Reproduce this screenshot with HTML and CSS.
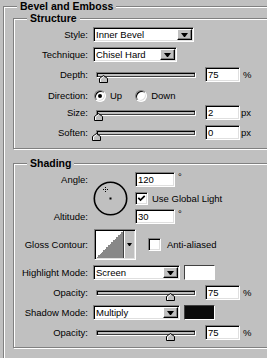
FILE: index.html
```html
<!DOCTYPE html>
<html lang="en">
<head>
<meta charset="utf-8">
<title>Bevel and Emboss</title>
<link rel="stylesheet" href="styles.css">
</head>
<body>
<fieldset class="group">
  <legend class="group-title">Bevel and Emboss</legend>

  <fieldset class="panel panel-structure">
    <legend class="panel-title">Structure</legend>
    <div class="rows">
      <div class="row">
        <span class="lbl">Style:</span>
        <div class="select select-style"><span class="select-text">Inner Bevel</span><span class="drop"><span class="tri"></span></span></div>
      </div>
      <div class="row">
        <span class="lbl">Technique:</span>
        <div class="select select-tech"><span class="select-text">Chisel Hard</span><span class="drop"><span class="tri"></span></span></div>
      </div>
      <div class="row">
        <span class="lbl">Depth:</span>
        <div class="slider"><span class="thumb" style="left:2px"><svg width="9" height="8" viewBox="0 0 9 8"><path d="M0.5 7.5V3.5L4.5 0.5L8.5 3.5V7.5Z" fill="#c0c0c0" stroke="#000"/><path d="M1.5 7V3.9L4.5 1.7" fill="none" stroke="#fff"/></svg></span></div>
        <span class="num">75</span><span class="unit">%</span>
      </div>
      <div class="row row-dir">
        <span class="lbl">Direction:</span>
        <div class="opts">
          <span class="opt"><span class="radio"><span class="dot"></span></span>Up</span>
          <span class="opt"><span class="radio"></span>Down</span>
        </div>
      </div>
      <div class="row">
        <span class="lbl">Size:</span>
        <div class="slider"><span class="thumb" style="left:-3px"><svg width="9" height="8" viewBox="0 0 9 8"><path d="M0.5 7.5V3.5L4.5 0.5L8.5 3.5V7.5Z" fill="#c0c0c0" stroke="#000"/><path d="M1.5 7V3.9L4.5 1.7" fill="none" stroke="#fff"/></svg></span></div>
        <span class="num">2</span><span class="unit unit-px">px</span>
      </div>
      <div class="row">
        <span class="lbl">Soften:</span>
        <div class="slider"><span class="thumb" style="left:-5px"><svg width="9" height="8" viewBox="0 0 9 8"><path d="M0.5 7.5V3.5L4.5 0.5L8.5 3.5V7.5Z" fill="#c0c0c0" stroke="#000"/><path d="M1.5 7V3.9L4.5 1.7" fill="none" stroke="#fff"/></svg></span></div>
        <span class="num">0</span><span class="unit unit-px">px</span>
      </div>
    </div>
  </fieldset>

  <fieldset class="panel panel-shading">
    <legend class="panel-title">Shading</legend>
    <div class="rows">
      <div class="angle-grid">
        <span class="lbl2 g-r1">Angle:</span>
        <svg class="dial" width="35" height="35" viewBox="0 0 35 35"><circle cx="17.5" cy="17.5" r="16.2" fill="none" stroke="#000" stroke-width="1.6"/><path d="M10 8.5h5M12.5 6v5" stroke="#000" stroke-width="1" stroke-dasharray="1 1"/><rect x="16.5" y="16.5" width="2" height="2" fill="#000"/></svg>
        <div class="cell g-r1c"><span class="num num-deg">120</span><span class="deg">°</span></div>
        <div class="cell g-r2c"><span class="check"><svg width="9" height="9" viewBox="0 0 9 9"><path d="M1.3 3.8L3.5 6L7.7 1.8" fill="none" stroke="#000" stroke-width="1.7"/></svg></span><span class="cb-text">Use Global Light</span></div>
        <span class="lbl2 g-r3">Altitude:</span>
        <div class="cell g-r3c"><span class="num num-deg">30</span><span class="deg">°</span></div>
      </div>

      <div class="row row-gloss">
        <span class="lbl">Gloss Contour:</span>
        <div class="contour"><span class="contour-preview"></span><span class="contour-drop"><span class="tri tri-sm"></span></span></div>
        <span class="check check-aa"></span><span class="cb-text">Anti-aliased</span>
      </div>

      <div class="row">
        <span class="lbl">Highlight Mode:</span>
        <div class="select select-mode"><span class="select-text">Screen</span><span class="drop"><span class="tri"></span></span></div>
        <span class="swatch swatch-white"></span>
      </div>
      <div class="row">
        <span class="lbl">Opacity:</span>
        <div class="slider"><span class="thumb" style="left:69px"><svg width="9" height="8" viewBox="0 0 9 8"><path d="M0.5 7.5V3.5L4.5 0.5L8.5 3.5V7.5Z" fill="#c0c0c0" stroke="#000"/><path d="M1.5 7V3.9L4.5 1.7" fill="none" stroke="#fff"/></svg></span></div>
        <span class="num">75</span><span class="unit">%</span>
      </div>
      <div class="row">
        <span class="lbl">Shadow Mode:</span>
        <div class="select select-mode"><span class="select-text">Multiply</span><span class="drop"><span class="tri"></span></span></div>
        <span class="swatch swatch-black"></span>
      </div>
      <div class="row">
        <span class="lbl">Opacity:</span>
        <div class="slider"><span class="thumb" style="left:69px"><svg width="9" height="8" viewBox="0 0 9 8"><path d="M0.5 7.5V3.5L4.5 0.5L8.5 3.5V7.5Z" fill="#c0c0c0" stroke="#000"/><path d="M1.5 7V3.9L4.5 1.7" fill="none" stroke="#fff"/></svg></span></div>
        <span class="num">75</span><span class="unit">%</span>
      </div>
    </div>
  </fieldset>
</fieldset>
</body>
</html>
```

FILE: styles.css
```css
* { box-sizing: border-box; }

html, body {
  margin: 0;
  padding: 0;
  width: 267px;
  height: 358px;
  overflow: hidden;
  background: #c0c0c0;
}

body {
  font-family: "Liberation Sans", Arial, sans-serif;
  font-size: 9.5px;
  color: #000;
}

/* etched group frames */
.group,
.panel {
  border: 1px solid #808080;
  box-shadow: inset 1px 1px #fff, 1px 1px #fff;
  min-inline-size: 0;
}

.group {
  margin: 0 0 0 3px;
  padding: 5px 0 0 9px;
  width: 330px;
  height: 420px;
}

.group-title,
.panel-title {
  font-weight: bold;
  font-size: 10.5px;
  line-height: 9px;
  padding: 0 3px;
  background: #c0c0c0;
}

.group-title {
  margin-left: 4px;
  line-height: 12px;
  margin-bottom: -3px;
}

.panel-title { margin-left: 13px; }

.panel {
  margin: 0;
  padding: 4px 0 8px 0;
  width: 290px;
}

.panel-shading {
  margin-top: 10px;
  padding-bottom: 7px;
}

.rows {
  display: flex;
  flex-direction: column;
  gap: 5px;
}

.row {
  display: flex;
  align-items: center;
  height: 15px;
}

.row-dir { margin: 1px 0 -3px; }

.lbl {
  flex: none;
  width: 74px;
  margin-right: 5px;
  text-align: right;
  white-space: nowrap;
}

/* sunken field */
.select,
.num,
.check,
.contour {
  background: #fff;
  border: 1px solid;
  border-color: #808080 #fff #fff #808080;
  box-shadow: inset 1px 1px #000, inset -1px -1px #dfdfdf;
}

.select {
  display: flex;
  height: 15px;
  padding: 1px;
}

.select-style { width: 101px; }
.select-tech { width: 84px; }
.select-mode { width: 87px; }

.select-text {
  flex: 1;
  padding-left: 1px;
  line-height: 11px;
  white-space: nowrap;
  overflow: hidden;
}

.drop {
  flex: none;
  width: 15px;
  height: 11px;
  background: #c0c0c0;
  border: 1px solid;
  border-color: #fff #000 #000 #fff;
  box-shadow: inset -1px -1px #808080;
  display: flex;
  align-items: center;
  justify-content: center;
}

.tri {
  width: 1px;
  height: 0;
  border-left: 3px solid transparent;
  border-right: 3px solid transparent;
  border-top: 4px solid #000;
  box-sizing: content-box;
}

.tri-sm {
  border-left-width: 2px;
  border-right-width: 2px;
  border-top-width: 3px;
}

/* slider */
.slider {
  position: relative;
  flex: none;
  width: 100px;
  height: 6px;
  margin-left: 3px;
  background: #c0c0c0;
  border: 1px solid;
  border-color: #808080 #fff #fff #808080;
  box-shadow: inset 1px 1px #000, inset -1px -1px #404040;
}

.thumb {
  position: absolute;
  top: 2px;
  width: 9px;
  height: 8px;
  display: block;
}

.thumb svg { display: block; }

.num {
  flex: none;
  width: 35px;
  height: 15px;
  margin-left: 9px;
  padding: 1px 0 0 2px;
  line-height: 11px;
}

.unit { margin-left: 3px; }
.unit-px { margin-left: 1px; }

/* radios */
.opts {
  display: flex;
  gap: 13px;
  margin-left: 1px;
}

.opt {
  display: flex;
  align-items: center;
  gap: 4px;
}

.radio {
  width: 12px;
  height: 12px;
  border-radius: 50%;
  background: #fff;
  border: 1px solid;
  border-color: #808080 #fff #fff #808080;
  box-shadow: inset 1px 1px #000, inset -1px -1px #dfdfdf;
  display: flex;
  align-items: center;
  justify-content: center;
}

.dot {
  width: 4px;
  height: 4px;
  border-radius: 50%;
  background: #000;
}

/* angle area */
.angle-grid {
  display: grid;
  grid-template-columns: 79px 42px auto;
  grid-template-rows: 15px 14px 15px;
  row-gap: 4px;
}

.lbl2 {
  grid-column: 1;
  padding-right: 5px;
  text-align: right;
  align-self: center;
  white-space: nowrap;
}

.g-r1 { grid-row: 1; }
.g-r3 { grid-row: 3; }

.dial {
  grid-column: 2;
  grid-row: 1 / 4;
  align-self: center;
  display: block;
}

.cell {
  grid-column: 3;
  display: flex;
  align-items: center;
}

.g-r1c { grid-row: 1; }
.g-r2c { grid-row: 2; }
.g-r3c { grid-row: 3; }

.num-deg {
  width: 40px;
  margin-left: 0;
}

.deg {
  margin-left: 3px;
  align-self: flex-start;
  line-height: 9px;
  color: #000;
}

.check {
  flex: none;
  width: 13px;
  height: 13px;
  display: flex;
  align-items: center;
  justify-content: center;
}

.check svg { display: block; }

.cb-text {
  margin-left: 4px;
  white-space: nowrap;
}

/* gloss contour */
.row-gloss { height: 31px; }

.contour {
  flex: none;
  display: flex;
  width: 42px;
  height: 31px;
  margin-left: 1px;
  padding: 1px;
}

.contour-preview {
  flex: 1;
  background: linear-gradient(to bottom right, #fff 50%, #888 50%);
  border-right: 1px solid #404040;
}

.contour-drop {
  flex: none;
  width: 10px;
  background: #c0c0c0;
  border-left: 1px solid #fff;
  display: flex;
  align-items: center;
  justify-content: center;
}

.check-aa {
  margin-left: 12px;
}

.check-aa + .cb-text { margin-left: 6px; }

/* swatches */
.swatch {
  flex: none;
  width: 31px;
  height: 15px;
  margin-left: 4px;
  border: 1px solid;
  border-color: #404040 #fff #fff #404040;
}

.swatch-white { background: #fff; }
.swatch-black { background: #0a0a0a; }
```
